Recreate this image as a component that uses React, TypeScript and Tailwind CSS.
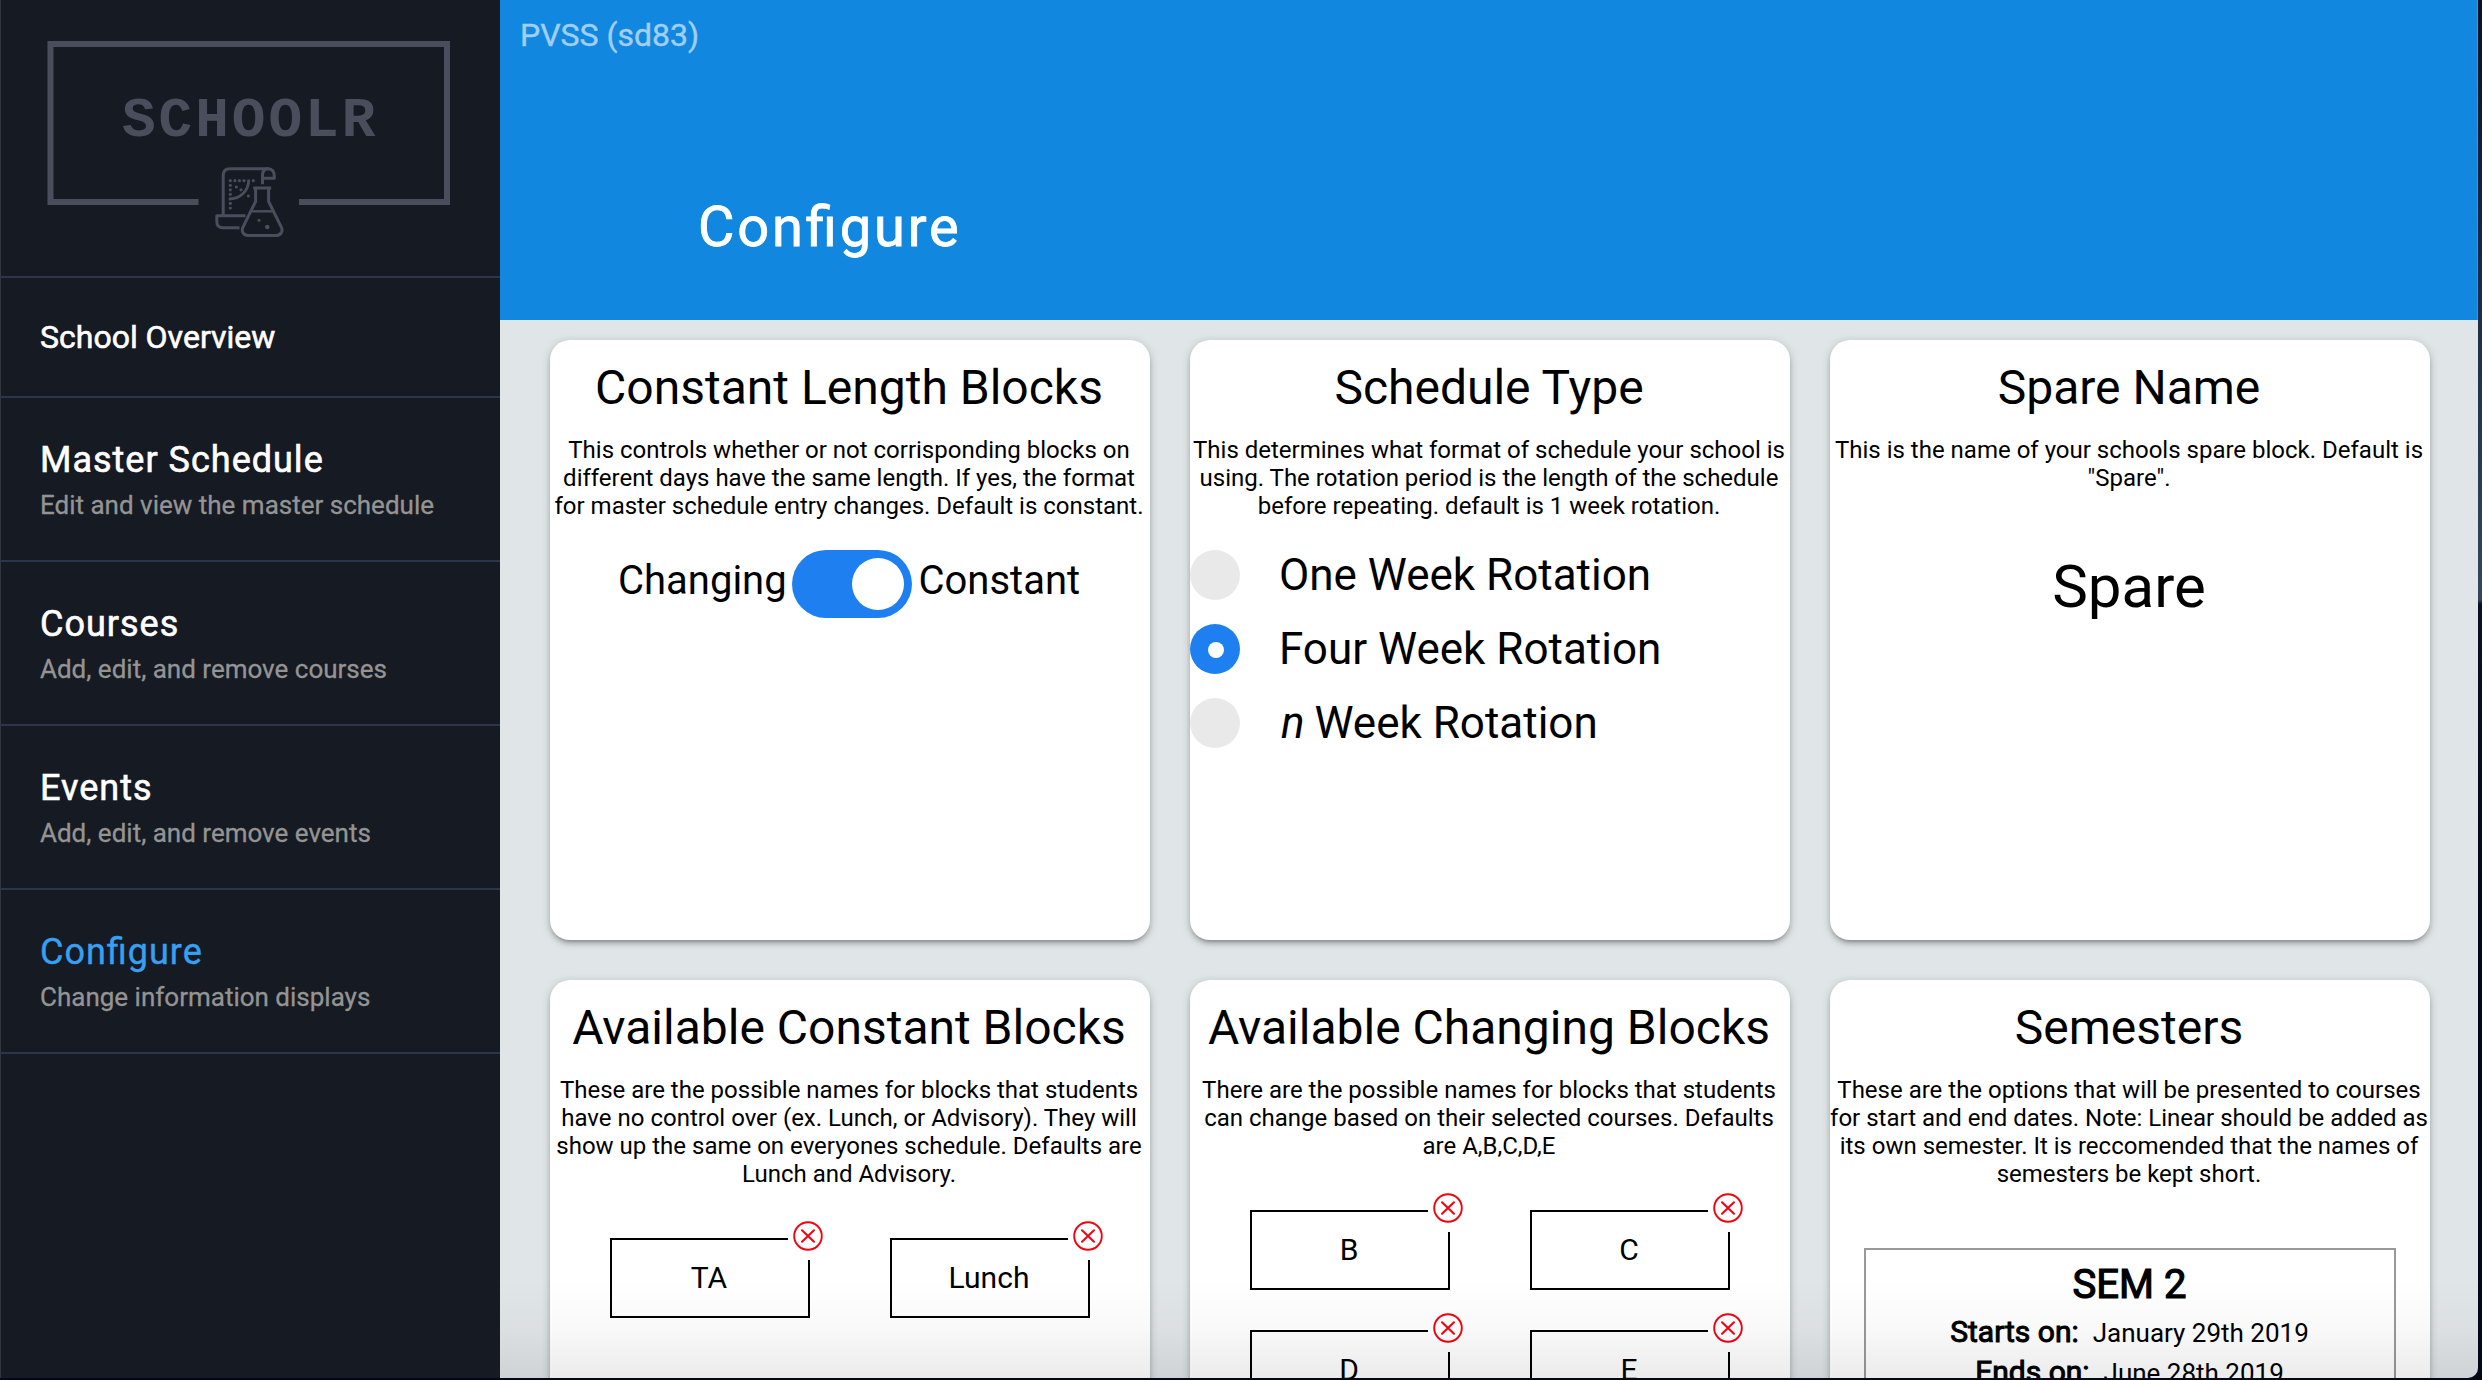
import React from 'react';

const NAV = [
  { title: 'Master Schedule', sub: 'Edit and view the master schedule' },
  { title: 'Courses', sub: 'Add, edit, and remove courses' },
  { title: 'Events', sub: 'Add, edit, and remove events' },
  { title: 'Configure', sub: 'Change information displays', active: true },
];

const GRAPH_DOTS: [number, number][] = [
  [230.3, 180.7], [234.9, 180.7], [239.4, 180.7], [244, 180.7], [253.3, 180.7],
  [230.3, 185.3], [230.3, 189.8], [230.3, 194.3], [230.3, 203.4], [230.3, 208],
  [236.4, 187], [241, 189.8], [248.4, 196],
];

function Logo() {
  return (
    <svg width="500" height="276" viewBox="0 0 500 276" className="block" fill="none" stroke="#4a4e5c">
      <path d="M198.5 202H50.5V44H447V202H299" strokeWidth="6" />
      <text
        x="122"
        y="136"
        fill="#4a4e5c"
        stroke="none"
        className="font-['Liberation_Mono',monospace] text-[56px] font-bold tracking-[3px]"
      >
        SCHOOLR
      </text>
      <g strokeWidth="3" strokeLinejoin="round">
        <path d="M223.2 215.5V175.5Q223.2 168.8 230 168.8H267.5Q274.3 168.8 274.3 176V178.3H262.5M262.5 184.2V175.5Q262.5 168.8 268.5 168.8" />
        <path d="M245.5 215.7H216.8V221.5Q216.8 227.8 223 227.8H239.5" />
        <path d="M253.2 188H271.2" />
        <path d="M255.6 188V201.5L243 227.2C241 231.5 243.5 235.4 248 235.4H276.3C280.8 235.4 283.3 231.5 281.3 227.2L268.6 201.5V188" />
        <path d="M251.4 211.3H272.8" strokeWidth="2.4" />
        <path d="M248.7 179.5C248.7 191 240.5 199 228.8 199" strokeWidth="2.8" />
      </g>
      <g fill="#4a4e5c" stroke="none">
        {GRAPH_DOTS.map(([x, y]) => (
          <circle key={`${x}-${y}`} cx={x} cy={y} r="1.6" />
        ))}
        <circle cx="259" cy="220.3" r="1.5" />
        <circle cx="267.3" cy="227" r="2.3" />
      </g>
    </svg>
  );
}

function Card({ title, text, children }: { title: string; text: string; children: React.ReactNode }) {
  return (
    <section className="h-[600px] w-[600px] rounded-[20px] bg-white pt-[19px] shadow-[0_4px_4px_rgba(0,0,0,0.14),0_6px_2px_-4px_rgba(0,0,0,0.12),0_2px_10px_rgba(0,0,0,0.2)]">
      <h2 className="-ml-[2px] text-center text-[48px] leading-[57px]">{title}</h2>
      <p className="mt-5 -ml-[2px] text-center text-[24px] leading-[28px]">{text}</p>
      {children}
    </section>
  );
}

function Radio({ checked, children }: { checked?: boolean; children: React.ReactNode }) {
  return (
    <div className="flex h-[50px] gap-[39px]">
      <span className={checked ? 'h-[50px] w-[50px] rounded-full bg-[#1e80f0] p-[18px]' : 'h-[50px] w-[50px] rounded-full bg-[#e9e9e9]'}>
        {checked && <span className="block h-4 w-4 rounded-full bg-white" />}
      </span>
      <span className="text-[44px] leading-[50px]">{children}</span>
    </div>
  );
}

function Blocks({ names }: { names: string[] }) {
  return (
    <div className="mt-[50px] grid grid-cols-[200px_200px] gap-x-20 gap-y-10 pl-[60px]">
      {names.map((n) => (
        <div key={n} className="relative h-20 border-2 border-black pt-5 pr-[2px] text-center text-[30px] leading-[35px]">
          {n}
          <span className="absolute -top-[2px] -right-[2px] h-[22px] w-[22px] bg-white" />
          <svg className="absolute -top-[19px] -right-[15px]" width="30" height="30" viewBox="0 0 30 30" fill="none" stroke="#f5000f">
            <circle cx="15" cy="15" r="13.8" strokeWidth="1.9" />
            <path d="M9 9.2L21 20.8M21 9.2L9 20.8" strokeWidth="2" strokeLinecap="round" />
          </svg>
        </div>
      ))}
    </div>
  );
}

function DateRow({ label, value }: { label: string; value: string }) {
  return (
    <div className="mb-[3px] flex items-baseline justify-center gap-[14px] leading-[35px]">
      <span className="text-[30px] [-webkit-text-stroke:1px_black]">{label}</span>
      <span className="text-[26px]">{value}</span>
    </div>
  );
}

export default function App() {
  return (
    <div className="flex h-[1380px] w-[2482px] flex-col overflow-hidden bg-[linear-gradient(180deg,#0b1024_0px,#1a2742_250px,#34465c_600px,#0b1122_604px,#040816_900px,#040816_1380px)] font-[Roboto,sans-serif] text-black">
      <div className="relative flex h-[1378px] w-[2478px] overflow-hidden rounded-br-[10px]">
        <aside className="h-full w-[500px] shrink-0 bg-[#161a22] shadow-[inset_1px_0_0_#32363d]">
          <Logo />
          <nav className="border-t-2 border-[#2c364a] text-white">
            <div className="h-[120px] border-b-2 border-[#2c364a] pt-10 pl-10 text-[32px] leading-[38px] [-webkit-text-stroke:0.6px_white]">
              School Overview
            </div>
            {NAV.map((n) => (
              <div key={n.title} className="h-[164px] border-b-2 border-[#2c364a] pt-[41px] pl-10">
                <div
                  className={
                    n.active
                      ? "text-[36px] leading-[42px] tracking-[1px] text-[#35a0f4] [-webkit-text-stroke:0.4px_#35a0f4] [font-feature-settings:'liga'_1]"
                      : 'text-[36px] leading-[42px] tracking-[1px] [-webkit-text-stroke:0.6px_white]'
                  }
                >
                  {n.title}
                </div>
                <div className="mt-[9px] text-[26px] leading-[30px] text-[#949494] [-webkit-text-stroke:0.3px_#949494]">{n.sub}</div>
              </div>
            ))}
          </nav>
        </aside>
        <main className="flex h-full w-[1978px] flex-col bg-[#e0e5e8]">
          <header className="h-[320px] shrink-0 bg-[#1287df] pt-4 shadow-[inset_-1px_0_0_#3498e8]">
            <div className="pl-5 text-[32px] leading-[38px] text-[#a0cff2] [-webkit-text-stroke:0.4px_#a0cff2]">PVSS (sd83)</div>
            <h1 className="mt-[140px] pl-[198px] text-[56px] leading-[66px] tracking-[2.85px] text-white [-webkit-text-stroke:0.8px_white] [font-feature-settings:'liga'_1]">
              Configure
            </h1>
          </header>
          <div className="grid grid-cols-[600px_600px_600px] gap-10 pt-5 pl-[50px]">
            <Card
              title="Constant Length Blocks"
              text="This controls whether or not corrisponding blocks on different days have the same length. If yes, the format for master schedule entry changes. Default is constant."
            >
              <div className="mt-[30px] flex pl-[68px] text-[40px] leading-[47px]">
                <span className="mt-[7px] w-[174px]">Changing</span>
                <span className="flex h-[68px] w-[120px] justify-end rounded-full bg-[#1e80f0] p-2">
                  <span className="h-[52px] w-[52px] rounded-full bg-white" />
                </span>
                <span className="mt-[7px] ml-[6.5px]">Constant</span>
              </div>
            </Card>
            <Card
              title="Schedule Type"
              text="This determines what format of schedule your school is using. The rotation period is the length of the schedule before repeating. default is 1 week rotation."
            >
              <div className="mt-[30px] flex flex-col gap-6">
                <Radio>One Week Rotation</Radio>
                <Radio checked>Four Week Rotation</Radio>
                <Radio>
                  <i className="mr-[-1px] ml-[2px]">n</i> Week Rotation
                </Radio>
              </div>
            </Card>
            <Card title="Spare Name" text={'This is the name of your schools spare block. Default is "Spare".'}>
              <div className="mt-[59px] -ml-[2px] text-center text-[60px] leading-[71px]">Spare</div>
            </Card>
            <Card
              title="Available Constant Blocks"
              text="These are the possible names for blocks that students have no control over (ex. Lunch, or Advisory). They will show up the same on everyones schedule. Defaults are Lunch and Advisory."
            >
              <Blocks names={['TA', 'Lunch']} />
            </Card>
            <Card
              title="Available Changing Blocks"
              text="There are the possible names for blocks that students can change based on their selected courses. Defaults are A,B,C,D,E"
            >
              <Blocks names={['B', 'C', 'D', 'E']} />
            </Card>
            <Card
              title="Semesters"
              text="These are the options that will be presented to courses for start and end dates. Note: Linear should be added as its own semester. It is reccomended that the names of semesters be kept short."
            >
              <div className="mx-[34px] mt-[60px] h-[240px] border-2 border-[#999] pt-[11px] pr-px">
                <div className="mb-[6px] text-center text-[40px] leading-[47px] [-webkit-text-stroke:1.2px_black]">SEM 2</div>
                <DateRow label="Starts on:" value="January 29th 2019" />
                <DateRow label="Ends on:" value="June 28th 2019" />
              </div>
            </Card>
          </div>
        </main>
        <div className="pointer-events-none absolute right-0 bottom-0 h-[100px] w-[1978px] bg-[linear-gradient(180deg,rgba(0,0,0,0),rgba(0,0,0,0.025)_50%,rgba(0,0,0,0.08))]" />
      </div>
    </div>
  );
}
